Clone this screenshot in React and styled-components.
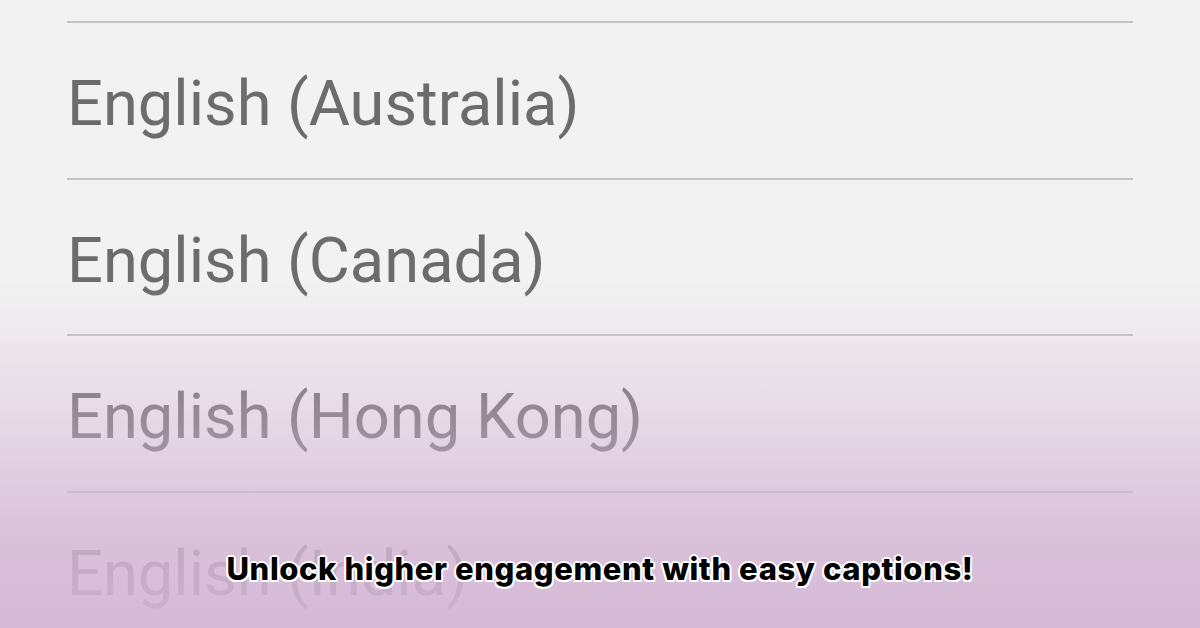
import React from 'react';
import styled, { createGlobalStyle } from 'styled-components';

const languages = ['English (Australia)', 'English (Canada)', 'English (Hong Kong)', 'English (India)'];

const GlobalStyle = createGlobalStyle`
  html, body { margin: 0; padding: 0; }
  body { background: #f2f2f2; }
`;

const Screen = styled.div`
  position: relative;
  width: 1200px;
  height: 628px;
  overflow: hidden;
  background: #f2f2f2;
`;

const List = styled.ul`
  list-style: none;
  margin: 0;
  padding: 21px 67px 0 67px;
`;

const Item = styled.li`
  height: 156.7px;
  border-top: 2px solid #c3c3c3;
  display: flex;
  align-items: center;
  padding-top: 5px;
  box-sizing: border-box;
  font-family: Roboto, 'Liberation Sans', sans-serif;
  font-size: 63.2px;
  color: #6c6c6c;
`;

const Fade = styled.div`
  position: absolute;
  inset: 0;
  pointer-events: none;
  background: linear-gradient(
    to bottom,
    rgba(212, 182, 212, 0) 0px,
    rgba(212, 182, 212, 0) 280px,
    rgba(212, 182, 212, 0.35) 400px,
    rgba(212, 182, 212, 0.8) 530px,
    rgba(212, 182, 212, 0.94) 628px
  );
`;

const Caption = styled.div`
  position: absolute;
  left: 0;
  right: 0;
  top: 550px;
  text-align: center;
  font-family: Inter, 'Open Sans', sans-serif;
  font-weight: 800;
  font-size: 31px;
  letter-spacing: 0.6px;
  color: #000;
  text-shadow:
    2px 0 0 #fff, -2px 0 0 #fff, 0 2px 0 #fff, 0 -2px 0 #fff,
    1.5px 1.5px 0 #fff, -1.5px 1.5px 0 #fff, 1.5px -1.5px 0 #fff, -1.5px -1.5px 0 #fff;
`;

export default function App() {
  return (
    <Screen>
      <GlobalStyle />
      <List>
        {languages.map((lang) => (
          <Item key={lang}>{lang}</Item>
        ))}
      </List>
      <Fade />
      <Caption>Unlock higher engagement with easy captions!</Caption>
    </Screen>
  );
}
